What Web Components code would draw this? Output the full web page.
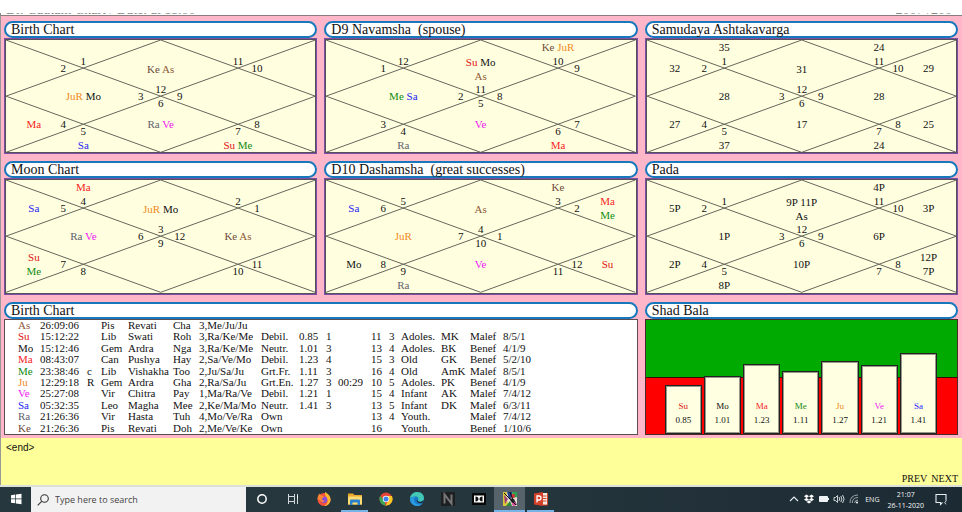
<!DOCTYPE html>
<html lang="en">
<head>
<meta charset="utf-8">
<title>Birth Chart</title>
<style>
  body { margin: 0; background: #fff; font-family: "Liberation Serif", "Times New Roman", serif; color: #111; }
</style>
</head>
<body>
<jyotish-app></jyotish-app>

<script>
const COLORS = {
  Su: '#e01010', Mo: '#111', Ma: '#f82424', Me: '#128a12', Ju: '#f08a24', JuR: '#f08a24',
  Ve: '#f018f0', Sa: '#2424f4', Ra: '#62626e', Ke: '#6e4a3a', As: '#8e5a38'
};
const esc = s => s.replace(/&/g, '&amp;').replace(/</g, '&lt;');

class ChartTitle extends HTMLElement {
  constructor() {
    super();
    this.attachShadow({ mode: 'open' }).innerHTML = `
      <style>
        :host { display: block; }
        h2 { margin: 0; box-sizing: border-box; height: 17px; border: 2px solid #1878bc; border-radius: 9px;
             background: #fff; padding: 0 5px; font-size: 14px; line-height: 13px; font-weight: 400;
             white-space: pre; }
      </style>
      <h2><slot></slot></h2>`;
  }
}
customElements.define('chart-title', ChartTitle);

class ChartPanel extends HTMLElement {
  constructor() {
    super();
    this.attachShadow({ mode: 'open' }).innerHTML = `
      <style>
        :host { display: flex; flex-direction: column; min-width: 0; }
        :host([wide]) { grid-column: span 2; }
        ::slotted(*) { flex: 1; }
      </style>
      <chart-title>${esc(this.getAttribute('heading'))}</chart-title>
      <slot></slot>`;
  }
}
customElements.define('chart-panel', ChartPanel);

/* North Indian chart: twelve houses, counter-clockwise from the top centre diamond */
const HOUSES = [
  { n: [50, 50, 0, -7],   p: [50, 25, 1] },
  { n: [25, 25, 0, -7],   p: [25, 0, 7] },
  { n: [25, 25, -20, 0],  p: [9, 25, 0] },
  { n: [50, 50, -20, 0],  p: [25, 50, 0] },
  { n: [25, 75, -20, 0],  p: [9, 75, 0] },
  { n: [25, 75, 0, 7],    p: [25, 100, -7] },
  { n: [50, 50, 0, 7],    p: [50, 75, 0] },
  { n: [75, 75, 0, 7],    p: [75, 100, -7] },
  { n: [75, 75, 19, 0],   p: [91, 75, 0] },
  { n: [50, 50, 19, 0],   p: [75, 50, 0] },
  { n: [75, 25, 19, 0],   p: [91, 25, 0] },
  { n: [75, 25, 0, -7],   p: [75, 0, 7] }
];
class KundliChart extends HTMLElement {
  constructor() {
    super();
    const first = +this.getAttribute('first');
    const plain = this.hasAttribute('plain');
    const houses = this.getAttribute('houses').split(';');
    let out = '';
    HOUSES.forEach((h, i) => {
      const sign = (first + i - 1) % 12 + 1;
      out += `<text x="${h.n[0]}%" y="${h.n[1]}%" dx="${h.n[2]}" dy="${h.n[3] + 4}">${sign}</text>`;
      const rows = (houses[i] || '').trim().split('/').filter(Boolean);
      rows.forEach((row, r) => {
        const shift = rows.length > 1 ? (r ? 7 : -7) : 0;
        const words = row.split(' ').map(w => plain ? w : `<tspan fill="${COLORS[w] || '#111'}">${w}</tspan>`);
        out += `<text x="${h.p[0]}%" y="${h.p[1]}%" dy="${h.p[2] + 4 + shift}">${words.join(' ')}</text>`;
      });
    });
    this.attachShadow({ mode: 'open' }).innerHTML = `
      <style>
        :host { display: flex; box-sizing: border-box; contain: size; min-height: 112px;
                border: 1px solid #7d4fa3; background: #ffffe0; }
        svg { flex: 1; min-width: 0; box-sizing: border-box; border: 1px solid #55505c; }
        line { stroke: #66665c; stroke-width: 1; }
        text { font-size: 11px; text-anchor: middle; fill: #111; }
      </style>
      <svg>
        <line x1="0" y1="0" x2="100%" y2="100%"/><line x1="100%" y1="0" x2="0" y2="100%"/>
        <line x1="50%" y1="0" x2="0" y2="50%"/><line x1="0" y1="50%" x2="50%" y2="100%"/>
        <line x1="50%" y1="100%" x2="100%" y2="50%"/><line x1="100%" y1="50%" x2="50%" y2="0"/>
        ${out}
      </svg>`;
  }
}
customElements.define('kundli-chart', KundliChart);

const COLS = [13, 22, 47, 14, 27, 45, 26, 62, 38, 27, 12, 33, 18, 12, 40, 29, 33];
const ROWS = `As|26:09:06||Pis|Revati|Cha|3,Me/Ju/Ju||||||||||
Su|15:12:22||Lib|Swati|Roh|3,Ra/Ke/Me|Debil.|0.85|1||11|3|Adoles.|MK|Malef|8/5/1
Mo|15:12:46||Gem|Ardra|Nga|3,Ra/Ke/Me|Neutr.|1.01|3||13|4|Adoles.|BK|Benef|4/1/9
Ma|08:43:07||Can|Pushya|Hay|2,Sa/Ve/Mo|Debil.|1.23|4||15|3|Old|GK|Benef|5/2/10
Me|23:38:46|c|Lib|Vishakha|Too|2,Ju/Sa/Ju|Grt.Fr.|1.11|3||16|4|Old|AmK|Malef|8/5/1
Ju|12:29:18|R|Gem|Ardra|Gha|2,Ra/Sa/Ju|Grt.En.|1.27|3|00:29|10|5|Adoles.|PK|Benef|4/1/9
Ve|25:27:08||Vir|Chitra|Pay|1,Ma/Ra/Ve|Debil.|1.21|1||15|4|Infant|AK|Malef|7/4/12
Sa|05:32:35||Leo|Magha|Mee|2,Ke/Ma/Mo|Neutr.|1.41|3||13|5|Infant|DK|Malef|6/3/11
Ra|21:26:36||Vir|Hasta|Tuh|4,Mo/Ve/Ra|Own||||13|4|Youth.||Malef|7/4/12
Ke|21:26:36||Pis|Revati|Doh|2,Me/Ve/Ke|Own||||16||Youth.||Benef|1/10/6`.split('\n').map(r => r.split('|'));

class PlanetTable extends HTMLElement {
  constructor() {
    super();
    this.attachShadow({ mode: 'open' }).innerHTML = `
      <style>
        :host { display: flex; box-sizing: border-box; border: 1px solid #5e4c54; background: #fff; }
        table { width: 100%; border-collapse: collapse; table-layout: fixed;
                font-size: 11px; line-height: 11px; }
        td { padding: 0; white-space: nowrap; vertical-align: middle; }
      </style>
      <table>
        <colgroup>${COLS.map(w => `<col style="width:${w}px">`).join('')}<col></colgroup>
        <tbody>${ROWS.map(r => `<tr><td></td>${r.map((c, i) =>
          `<td${i ? '' : ` style="color:${COLORS[c]}"`}>${c}</td>`).join('')}</tr>`).join('')}</tbody>
      </table>`;
  }
}
customElements.define('planet-table', PlanetTable);

class StrengthBars extends HTMLElement {
  constructor() {
    super();
    const bars = ROWS.slice(1, 8).map(r => `
      <li style="height:${r[8] * 50}%"><b style="color:${COLORS[r[0]]}">${r[0]}</b><span>${r[8]}</span></li>`).join('');
    this.attachShadow({ mode: 'open' }).innerHTML = `
      <style>
        :host { display: flex; box-sizing: border-box; border: 1px solid #4c2a2a;
                background: linear-gradient(#0a0 0 50%, #3a0808 50% calc(50% + 1px), #fe0000 calc(50% + 1px)); }
        ul { flex: 1; display: flex; align-items: flex-end; gap: 2px; margin: 0; padding: 0 20px 0 19px;
             list-style: none; }
        li { flex: 1; box-sizing: border-box; display: flex; flex-direction: column; justify-content: flex-end;
             align-items: center; padding-bottom: 6px; border: 1px solid #222; background: #ffffe2;
             box-shadow: inset 0 0 0 1px #99998a; font-size: 9px; line-height: 14px; }
        b { font-weight: 400; }
      </style>
      <ul>${bars}</ul>`;
  }
}
customElements.define('strength-bars', StrengthBars);

const ICONS = {
  cortana: `<circle cx="8" cy="8" r="4.2" fill="none" stroke="#fff" stroke-width="1.5"/>`,
  taskview: `<g fill="none" stroke="#d5dadd" stroke-width="1"><path d="M3.5 3v2.500h6V3M3.500 13v-2.500h6V13M3.500 5.500v5h6v-5z"/><path d="M12.500 3v2M12.500 7v6"/></g><path d="M12 5h1v2h-1z" fill="#fff"/>`,
  firefox: `<circle cx="8" cy="8.500" r="6.500" fill="#f4503c"/><path d="M9 1c4 2 6 5 5.500 9-.8 3-3.500 5-6.500 5 3-1.500 4-4 3.500-6C11 6.500 8.500 4.500 9 1z" fill="#ffb82e"/><circle cx="8" cy="8.700" r="3.300" fill="#8a4fd8"/><path d="M1.500 8C1.500 5 3 3.500 3.500 2.500c.5 1 1 1.500 2 1.700 1 .3 1.500 1 2.800 1.300-.5 1-2 1-2.300 2C5.800 9 7 10 9 9.500c-1 2-4 1.800-5 0z" fill="#ff8630"/>`,
  explorer: `<path d="M1 2.500h5l1.500 1.500H15v9.500H1z" fill="#e8a92c"/><path d="M1 5.500h14v8H1z" fill="#ffdc72"/><path d="M3 14V9.500q0-1 1-1h8q1 0 1 1V14h-2.500v-2.500h-5V14z" fill="#2c82cc"/>`,
  chrome: `<circle cx="8" cy="8" r="6.500" fill="#e54436"/><path d="M2.300 4.800 6.800 10.500 7.500 14.500A6.500 6.500 0 0 1 2.300 4.800z" fill="#3aa757"/><path d="M8 5h5.800A6.500 6.500 0 0 1 7.300 14.500L10.700 9.500z" fill="#fbc926"/><circle cx="8" cy="8" r="3.200" fill="#fff"/><circle cx="8" cy="8" r="2.500" fill="#3f82ee"/>`,
  edge: `<circle cx="8" cy="8" r="7" fill="#1878c8"/><path d="M1 7.500C1.500 3.500 4.500 1 8.300 1 12.500 1 15 4 15 7c0 2.500-2 3.700-4 3.700-1.500 0-2.200-.7-2-1.200 1-1.500.3-4-2.500-4C4 5.300 2 6.200 1 7.500z" fill="#42c8b4"/><path d="M1 8c1-1.500 3-2.500 5.500-2.300C4.500 7 4.500 10 6.500 12c1.800 1.800 4.500 1.800 6.800.5-1.500 2-3.500 2.600-5.500 2.500C3.800 14.800 1 11.500 1 8z" fill="#2a9be0"/><path d="M9 9.500c-.2.700.6 1.300 2 1.300 1.500 0 3-.6 4-2l-.6 2.600c-3 1.600-7 .6-6.800-2.400z" fill="#1f3038"/>`,
  nitro: `<path d="M1 1h14v14H1z" fill="#1d1f20"/><path d="M4.500 12.500v-9l7 9v-9" fill="none" stroke="#777" stroke-width="2"/>`,
  dolby: `<path d="M1 2h14v12H1z" fill="#080808"/><path d="M3 4.500h10v7H3z" fill="#fff"/><path d="M4.500 5.500c4 .2 4 4.800 0 5zM11.500 5.500c-4 .2-4 4.800 0 5z" fill="#111"/>`,
  jyotish: `<path d="M1 1h14v14H1z" fill="#e6dfcf"/><path d="M1 1h4l-1 6 3 8H1z" fill="#d8c83a"/><path d="M5 1h5v5L7 8z" fill="#23408e"/><path d="M10 1h5v5l-4 1z" fill="#31a04c"/><path d="M2 4l4 4-3 5z" fill="#a03a78"/><path d="m7 7 5 1 3 6-5-2z" fill="#25262b"/><circle cx="11" cy="5" r="2" fill="#d72f39"/><circle cx="12" cy="13" r="2" fill="#dc4ba0"/><path d="m4 15 4-5 2 5z" fill="#2b8a3b"/><path d="m2 2 12 12M8 1l3 8" stroke="#111"/>`,
  ppt: `<path d="M9 2h6v12H9z" fill="#f6e9e5"/><path d="M10 5h3.500M10 7.500h3.500M10 10h3.500" stroke="#d24726"/><path d="M14.500 2v12H9" fill="none" stroke="#d24726"/><path d="M1 2.500 10 1v14L1 13.500z" fill="#d2402a"/><path d="M4 11.500V5h2q2 0 2 2T6 9H4" fill="none" stroke="#fff" stroke-width="1.300"/>`,
  start: `<path d="m3 4.200 4.300-.6v4H3zM8 3.500l5.500-.8v4.900H8zM3 8.300h4.300v4L3 11.700zM8 8.300h5.500v5L8 12.500z" fill="#fff"/>`,
  search: `<g fill="none" stroke="#333" stroke-width="1.100"><circle cx="9.500" cy="6.500" r="3.800"/><path d="m6.700 9.300-4 4"/></g>`,
  up: `<path d="m4 10 4-4 4 4" fill="none" stroke="#e8edf0" stroke-width="1.100"/>`,
  dropbox: `<path d="m5.500 3.500 2.500 1.700 2.500-1.700 2.500 1.700-2.500 1.700 2.500 1.700-2.500 1.700L8 8.600l-2.500 1.700L3 8.600l2.500-1.700L3 5.200zM8 5.300 5.600 6.900 8 8.500l2.400-1.600zM5.500 10.900 8 9.300l2.500 1.600L8 12.500z" fill="#fff" fill-rule="evenodd"/>`,
  battery: `<path d="M3.500 5.500h8v5h-8z" fill="#eef2f4" stroke="#eef2f4"/><path d="M12.500 7v2" stroke="#eef2f4"/>`,
  volume: `<g fill="none" stroke="#dfe5e8" stroke-width=".9"><path d="M3 6.500h1.500l2-2v7l-2-2H3zM8 6q1.500 2 0 4M9.800 5q2.200 3 0 6M11.600 4q3 4 0 8"/></g>`,
  wifi: `<g fill="none" stroke="#9ba6ac" stroke-width="1"><path d="M4 12q0-8 8-8M6.300 12q0-5.500 5.700-5.500M8.700 12q0-3 3.300-3"/></g><circle cx="11" cy="11.500" r="1" fill="#fff"/>`,
  notify: `<path d="M3 3.500h10v8H9.500L7.500 13.500v-2H3z" fill="none" stroke="#e8edf0" stroke-width="1.100"/><circle cx="12" cy="12" r="2.500" fill="#1f2f38"/><path d="M13 10q-2.500 1.500 0 3.300" fill="none" stroke="#dfe5e8" stroke-width=".9"/>`
};
class TaskIcon extends HTMLElement {
  constructor() {
    super();
    const label = this.getAttribute('label');
    const svg = `<svg viewBox="0 0 16 16" aria-hidden="true">${ICONS[this.getAttribute('name')]}</svg>`;
    this.attachShadow({ mode: 'open' }).innerHTML = `
      <style>
        :host { display: flex; width: 31px; justify-content: center; }
        :host([small]) { width: 15px; }
        :host([active]) { background: #56636a; }
        button { all: unset; box-sizing: border-box; flex: 1; margin: 0 2px; display: flex; align-items: center;
                 justify-content: center; border-bottom: 2px solid transparent; cursor: pointer; }
        :host([small]) button { margin: 0; }
        :host([running]) button { border-color: #76b4e8; }
        :host([active]) button { margin: 0; }
        svg { display: block; width: 16px; height: 16px; flex: none; }
      </style>
      <button type="button" aria-label="${label}">${svg}</button>`;
  }
}
customElements.define('task-icon', TaskIcon);

class TaskBar extends HTMLElement {
  constructor() {
    super();
    this.attachShadow({ mode: 'open' }).innerHTML = `
      <style>
        :host { display: flex; justify-content: space-between; height: 25px; border-top: 2px solid #dce0da;
                background: linear-gradient(90deg, #26373e, #26363d 50%, #1c2b33);
                font-family: "Open Sans", "Noto Sans", sans-serif; color: #f4f6f7; }
        .side { display: flex; }
        label { display: flex; align-items: center; gap: 4px; width: 215px; box-sizing: border-box;
                padding-left: 4px; background: #f2f2f2; }
        label svg { width: 16px; height: 16px; }
        input { all: unset; flex: 1; min-width: 0; font-size: 9px; line-height: 14px; color: #333; }
        input::placeholder { color: #444; opacity: 1; }
        .tray { display: flex; padding-right: 6px; font-size: 7px; line-height: 11px; }
        .lang { align-self: center; padding: 0 8px 0 4px; }
        time { align-self: center; text-align: center; padding-right: 1px; }
        time span { display: block; }
      </style>
      <div class="side">
        <task-icon name="start" label="Start"></task-icon>
        <label><svg viewBox="0 0 16 16" aria-hidden="true">${ICONS.search}</svg>
          <input type="text" placeholder="Type here to search" aria-label="Type here to search"></label>
        <task-icon name="cortana" label="Cortana"></task-icon>
        <task-icon name="taskview" label="Task View"></task-icon>
        <task-icon name="firefox" label="Firefox"></task-icon>
        <task-icon name="explorer" label="File Explorer" running></task-icon>
        <task-icon name="chrome" label="Chrome"></task-icon>
        <task-icon name="edge" label="Edge"></task-icon>
        <task-icon name="nitro" label="Nitro"></task-icon>
        <task-icon name="dolby" label="Dolby"></task-icon>
        <task-icon name="jyotish" label="Jyotish" running active></task-icon>
        <task-icon name="ppt" label="PowerPoint" running></task-icon>
      </div>
      <div class="tray">
        <task-icon small name="up" label="Hidden icons"></task-icon>
        <task-icon small name="dropbox" label="Dropbox"></task-icon>
        <task-icon small name="battery" label="Battery"></task-icon>
        <task-icon small name="volume" label="Volume"></task-icon>
        <task-icon small name="wifi" label="Network"></task-icon>
        <span class="lang">ENG</span>
        <time><span>21:07</span><span>26-11-2020</span></time>
        <task-icon name="notify" label="Notifications"></task-icon>
      </div>`;
  }
}
customElements.define('task-bar', TaskBar);

class JyotishApp extends HTMLElement {
  constructor() {
    super();
    this.attachShadow({ mode: 'open' }).innerHTML = `
      <style>
        :host { display: flex; flex-direction: column; min-height: 100vh; }
        header { margin-top: 13px; height: 2px; overflow: hidden; display: flex; align-items: flex-end;
                 justify-content: space-between; padding: 0 10px 0 5px; border-bottom: 1px solid #8c7c80;
                 border-left: 1px solid #888; font-size: 14px; line-height: 11px; color: #888; white-space: pre; }
        main { flex: 1; display: grid; grid-template-columns: repeat(3, minmax(0, 1fr));
               grid-template-rows: repeat(3, 1fr); gap: 7px; padding: 5px 4px 3px 3px;
               border-left: 1px solid #999; background: #ffb6c8; }
        footer { display: flex; justify-content: space-between; min-height: 47px; box-sizing: border-box;
                 padding: 4px 4px 0 5px; border-left: 1px solid #999; background: #ffff99; }
        output { font: 10px/12px "Liberation Sans", Arial, sans-serif; }
        nav { display: flex; gap: 4px; align-self: flex-end; font-size: 10px; line-height: 13px; }
        a { color: #111; text-decoration: none; }
      </style>
      <header><span>Dr. Gautam Chart / Date: at 11:00</span><span>2007 /200</span></header>
      <main>
        <chart-panel heading="Birth Chart"><kundli-chart first="12" houses="Ke As;;;JuR Mo;Ma;Sa;Ra Ve;Su Me;;;;"></kundli-chart></chart-panel>
        <chart-panel heading="D9 Navamsha  (spouse)"><kundli-chart first="11" houses="Su Mo/As;;;Me Sa;;Ra;Ve;Ma;;;;Ke JuR"></kundli-chart></chart-panel>
        <chart-panel heading="Samudaya Ashtakavarga"><kundli-chart plain first="12" houses="31;35;32;28;27;37;17;24;25;28;29;24"></kundli-chart></chart-panel>
        <chart-panel heading="Moon Chart"><kundli-chart first="3" houses="JuR Mo;Ma;Sa;Ra Ve;Su/Me;;;;;Ke As;;"></kundli-chart></chart-panel>
        <chart-panel heading="D10 Dashamsha  (great successes)"><kundli-chart first="4" houses="As;;Sa;JuR;Mo;Ra;Ve;;Su;;Ma/Me;Ke"></kundli-chart></chart-panel>
        <chart-panel heading="Pada"><kundli-chart plain first="12" houses="9P 11P/As;;5P;1P;2P;8P;10P;;12P/7P;6P;3P;4P"></kundli-chart></chart-panel>
        <chart-panel wide heading="Birth Chart"><planet-table></planet-table></chart-panel>
        <chart-panel heading="Shad Bala"><strength-bars></strength-bars></chart-panel>
      </main>
      <footer>
        <output>&lt;end&gt;</output>
        <nav><a href="#prev">PREV</a><a href="#next">NEXT</a></nav>
      </footer>
      <task-bar></task-bar>`;
  }
}
customElements.define('jyotish-app', JyotishApp);
</script>
</body>
</html>
